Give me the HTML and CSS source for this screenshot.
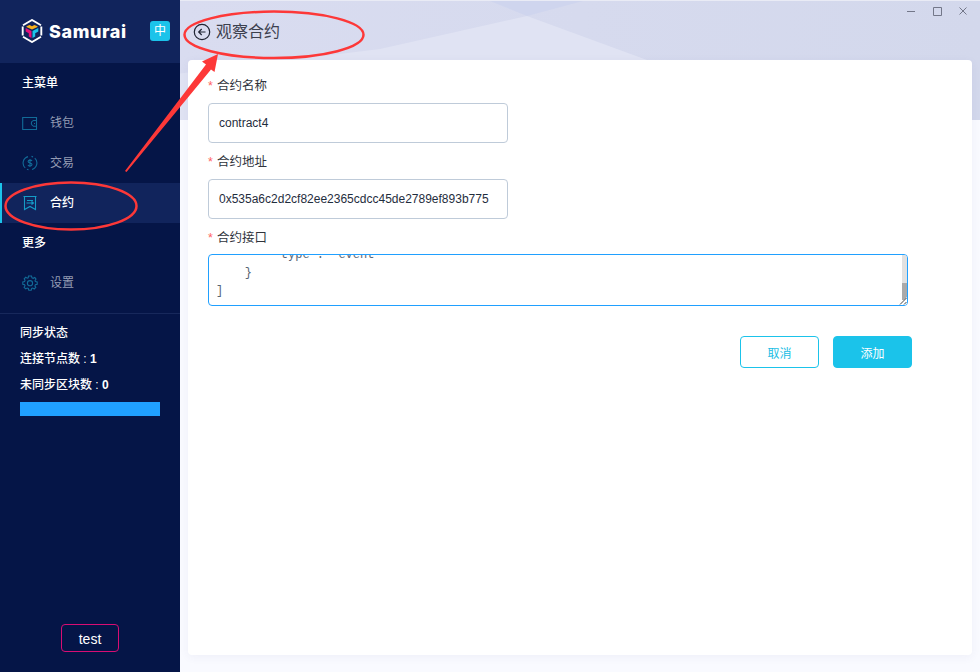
FILE: index.html
```html
<!DOCTYPE html>
<html lang="zh-CN">
<head>
<meta charset="utf-8">
<title>Samurai</title>
<link rel="stylesheet" href="styles.css">
</head>
<body>
<div class="app">
  <aside class="sidebar">
    <header class="brand">
      <svg class="logo" width="22" height="24" viewBox="0 0 22 24" fill="none">
        <path d="M2 6.200L11 1 20 6.200M20.300 7.500V16.500M20 17.800L11 23 2 17.800M1.700 16.500V7.500" stroke="#fff" stroke-width="1.900"/>
        <path d="M5.500 7.200L8.600 5.900 11 7.300 13.400 5.900 16.500 7.200V8L11 10.600 5.500 8Z" fill="#f9b21b"/>
        <path d="M4.700 9L10.500 12V19L7.800 17.500V14.300L4.700 12.500Z" fill="#e6107c"/>
        <path d="M17.300 9L11.500 12V19L14.200 17.500V14.300L17.300 12.500Z" fill="#1bc3ea"/>
      </svg>
      <span class="wordmark">Samurai</span>
      <span class="lang">中</span>
    </header>
    <nav class="menu">
      <div class="group">主菜单</div>
      <a class="item">
        <svg width="16" height="16" viewBox="0 0 16 16"><path d="M.7 2.500H14.500V14.500H.7ZM14.500 5.500H11.500Q9.300 6 9.300 8.300 9.300 10.500 11.500 11.200H14.500M12 8.500h1"/></svg>
        <span>钱包</span>
      </a>
      <a class="item">
        <svg width="16" height="16" viewBox="0 0 16 16"><path d="M6 1.600A6.700 6.700 0 0 0 3.200 12.900M5 14.200A6.700 6.700 0 0 0 6.500 14.700M10 14.500A6.700 6.700 0 0 0 12.800 3.200M11 2A6.700 6.700 0 0 0 9.500 1.400M10 6Q9.600 5.100 8 5.100 6.100 5.100 6.100 6.500 6.100 7.700 8 8 10 8.300 10 9.600 10 11 8 11 6.300 11 6 9.900M8 4V12"/></svg>
        <span>交易</span>
      </a>
      <a class="item active">
        <svg width="16" height="16" viewBox="0 0 16 16"><path d="M1.500 1.500H14.500M2.500 1.500V14.500L8 11.500 13.500 14.500V1.500M5 5.500H11M4.500 8H11.500M9.500 6.500L11.500 8 9.500 9.500"/></svg>
        <span>合约</span>
      </a>
      <div class="group">更多</div>
      <a class="item">
        <svg width="16" height="16" viewBox="0 0 16 16"><path d="M6.500 1H9.500L10 2.800 11.200 3.300 12.800 2.400 14 4.100 13 5.700 13.400 6.600 15.200 7V9.300L13.400 9.700 12.900 10.900 13.800 12.400 12.200 14 10.700 13.100 9.700 13.500 9.200 15.200H6.800L6.300 13.500 5.100 13 3.700 13.900 2.100 12.300 3 10.800 2.600 9.700.8 9.300V7L2.600 6.500 3 5.300 2.200 3.800 3.700 2.300 5.300 3.200 6.200 2.800Z"/><circle cx="8" cy="8.200" r="2.600"/></svg>
        <span>设置</span>
      </a>
    </nav>
    <section class="sync">
      <div>同步状态</div>
      <div>连接节点数 : <b>1</b></div>
      <div>未同步区块数 : <b>0</b></div>
      <div class="progress"></div>
    </section>
    <div class="network">test</div>
  </aside>

  <main class="main">
    <svg class="backdrop" width="800" height="120" viewBox="0 0 800 120">
      <defs><linearGradient id="sky"><stop offset="0" stop-color="#d9dcf0"/><stop offset="1" stop-color="#d3d8ec"/></linearGradient></defs>
      <rect width="800" height="120" fill="url(#sky)"/>
      <path d="M0 73.500L200 49 347 16 467 60 630 120H0Z" fill="#e0e3f3"/>
      <path d="M310 1H403L347 16Z" fill="#cfd5ee"/>
      <rect width="800" height="1" fill="#e9ebf5"/>
    </svg>
    <div class="titlebar">
      <h1 class="title">
        <svg width="18" height="18" viewBox="0 0 18 18"><circle cx="9" cy="9" r="7.700"/><path d="M12.500 9H6M8.700 6L5.700 9 8.700 12"/></svg>
        <span>观察合约</span>
      </h1>
      <svg class="controls" width="66" height="12" viewBox="0 0 66 12" fill="none" stroke="#737789"><path d="M1 6.500H9M27.500 2.500H35.500V10.500H27.500ZM53.500 2.500L60.500 9.500M60.500 2.500L53.500 9.500"/></svg>
    </div>
    <form class="card">
      <label class="label"><i>*</i>合约名称</label>
      <div class="input">contract4</div>
      <label class="label"><i>*</i>合约地址</label>
      <div class="input">0x535a6c2d2cf82ee2365cdcc45de2789ef893b775</div>
      <label class="label"><i>*</i>合约接口</label>
      <div class="editor">
        <pre class="code">        "type": "event"
    }
]</pre>
        <div class="scroll"><div class="thumb"></div></div>
        <svg class="grip" width="8" height="8" viewBox="0 0 8 8"><path d="M0 8L8 0V8Z" fill="#fff"/><path d="M1 7.500L7.500 1M5 7.500L7.500 5" stroke="#444"/></svg>
      </div>
      <div class="actions">
        <span class="btn">取消</span>
        <span class="btn primary">添加</span>
      </div>
    </form>
  </main>
</div>
<svg class="notes" width="980" height="672" viewBox="0 0 980 672">
  <ellipse cx="274" cy="34.800" rx="89.500" ry="23.200"/>
  <ellipse cx="71" cy="206" rx="65.500" ry="23.500"/>
  <path d="M125 171L206 64.500 202 61.500 218 54 214.500 72 211 69.500 126.500 172Z"/>
</svg>
</body>
</html>
```
FILE: styles.css
```css
* { box-sizing: border-box; }
body {
  margin: 0;
  overflow: hidden;
  font-family: "Liberation Sans", "Noto Sans CJK SC", sans-serif;
  font-size: 12px;
  color: #1f2d3d;
}
.app { display: flex; width: 980px; height: 672px; }

.sidebar {
  display: flex;
  flex-direction: column;
  flex: none;
  width: 180px;
  background: #051547;
  color: #fff;
}
.brand {
  display: flex;
  align-items: center;
  height: 63px;
  padding: 0 10px 2px 21px;
  background: #11245c;
}
.logo { flex: none; }
.wordmark {
  width: 79px;
  margin: 2px 22px 0 6px;
  font: 800 18px/24px "Inter", sans-serif;
  letter-spacing: .6px;
}
.lang {
  flex: none;
  width: 20px;
  height: 20px;
  border-radius: 3px;
  background: #1bc3ea;
  text-align: center;
  line-height: 21px;
}
.menu { height: 251px; border-bottom: 1px solid #17285b; }
.group { height: 40px; padding-left: 22px; line-height: 41px; font-weight: 500; }
.item {
  display: flex;
  align-items: center;
  gap: 12px;
  height: 40px;
  padding: 0 0 1px 22px;
  color: #949bb3;
}
.item span { margin-top: -2px; }
.item svg { fill: none; stroke: #126b98; stroke-width: 1.1; }
.item.active {
  padding-left: 20px;
  border-left: 2px solid #1bc3ea;
  background: #11245c;
  color: #fff;
  font-weight: 500;
}
.item.active svg { stroke: #159bc7; }
.sync { padding: 6px 20px 0; line-height: 26px; font-weight: 500; }
.progress { height: 14px; margin-top: 4px; background: #20a0ff; }
.network {
  width: 58px;
  height: 28px;
  margin: auto auto 20px 61px;
  border: 1px solid #d90d73;
  border-radius: 4px;
  font-size: 14px;
  line-height: 28px;
  text-align: center;
}

.main {
  position: relative;
  display: flex;
  flex-direction: column;
  flex: 1;
  padding: 0 8px 17px;
  background: #f9faff;
}
.backdrop { position: absolute; left: 0; top: 0; }
.titlebar {
  position: relative;
  display: flex;
  justify-content: space-between;
  height: 60px;
  padding: 5px 0 0 5px;
}
.title {
  display: flex;
  align-items: center;
  gap: 5px;
  height: 54px;
  margin: 0;
  font-size: 16px;
  font-weight: 400;
  color: #3c404e;
}
.title span { margin-top: -4px; }
.title svg { fill: none; stroke: #1f2433; stroke-width: 1.2; }
.card {
  position: relative;
  flex: 1;
  padding: 13px 20px;
  border-radius: 4px;
  background: #fff;
  box-shadow: 0 2px 10px rgba(60, 70, 130, .06);
}
.label {
  display: flex;
  gap: 4px;
  height: 30px;
  line-height: 27px;
  font-size: 12.5px;
  color: #30343c;
}
.label i { width: 5px; color: #ff6262; font-style: normal; }
.input {
  width: 300px;
  height: 40px;
  margin-bottom: 6px;
  padding-left: 10px;
  border: 1px solid #bfcbd9;
  border-radius: 4px;
  line-height: 39px;
}
.editor {
  position: relative;
  display: flex;
  justify-content: space-between;
  width: 700px;
  height: 52px;
  margin-top: -1px;
  padding-left: 7px;
  border: 1px solid #20a0ff;
  border-radius: 4px;
  overflow: hidden;
}
.code {
  margin: -9px 0 0;
  font: 12px/18px "Liberation Mono", monospace;
  color: #596675;
}
.scroll {
  display: flex;
  align-items: flex-end;
  width: 5px;
  height: 45px;
  background: #e1e1e1;
}
.thumb { width: 5px; height: 17px; background: #aaa; }
.grip { position: absolute; right: 0; bottom: 0; }
.actions { display: flex; justify-content: flex-end; gap: 14px; margin: 30px 40px 0 0; }
.btn {
  width: 79px;
  height: 32px;
  border: 1px solid #1bc3ea;
  border-radius: 4px;
  color: #1bbde4;
  text-align: center;
  line-height: 34px;
}
.btn.primary { background: #1bc3ea; color: #fff; }

.notes {
  position: absolute;
  left: 0;
  top: 0;
  pointer-events: none;
  fill: none;
}
.notes ellipse { stroke: #fd3838; stroke-width: 2.5; }
.notes path { fill: #fd3838; }
```
